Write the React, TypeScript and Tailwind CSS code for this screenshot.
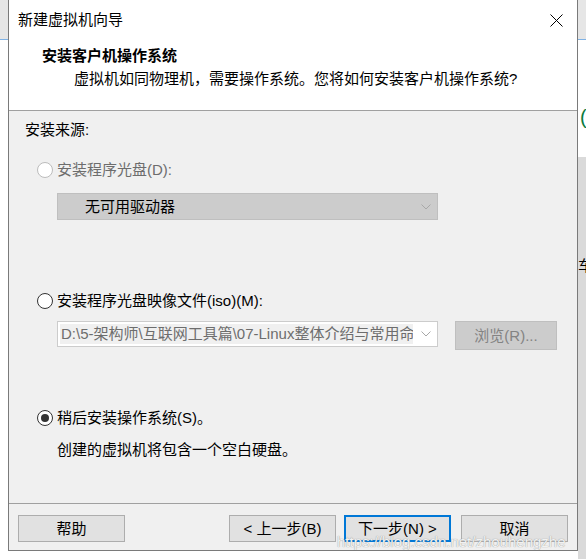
import React from "react";

const Radio = ({ checked, disabled }: { checked?: boolean; disabled?: boolean }) => (
	<span
		className={
			disabled
				? "w-4 h-4 rounded-full border border-[#bcbcbc] bg-white shrink-0"
				: "w-4 h-4 rounded-full border border-[#333333] bg-white shrink-0 flex items-center justify-center"
		}
	>
		{checked && <span className="w-2 h-2 rounded-full bg-[#333333]" />}
	</span>
);

const Chevron = () => (
	<svg width="10" height="6" viewBox="0 0 10 6" className="shrink-0">
		<polyline points="0.5,0.5 5,5 9.5,0.5" fill="none" stroke="#a8a8a8" strokeWidth="1" />
	</svg>
);

const FootButton = ({ label, primary }: { label: string; primary?: boolean }) => (
	<button
		className={
			primary
				? "w-[107px] h-[27px] bg-[#e1e1e1] border-2 border-[#0078d7] text-[15px] text-black flex items-center justify-center"
				: "w-[107px] h-[27px] bg-[#e1e1e1] border border-[#adadad] text-[15px] text-black flex items-center justify-center"
		}
	>
		{label}
	</button>
);

export default function App() {
	return (
		<div className="relative w-[586px] h-[559px] overflow-hidden bg-white flex font-['Liberation_Sans','Noto_Sans_CJK_SC',sans-serif] text-[15px] leading-[20px] text-black">
			{/* LEFT STRIP (window behind) */}
			<div className="w-[8px] flex flex-col">
				<div className="h-[39px] bg-[#e6e6e6]" />
				<div className="h-px bg-[#7fb2e5]" />
				<div className="flex-1 bg-white" />
			</div>

			{/* DIALOG */}
			<div className="w-[570px] h-[551px] flex flex-col border-x border-b border-[#7a7a7a]">
				{/* HEADER */}
				<div className="h-[111px] bg-white border-b border-[#a0a0a0] flex flex-col">
					<div className="h-[40px] flex items-center justify-between pl-[9px] pr-[14px]">
						<span>新建虚拟机向导</span>
						<svg width="13" height="13" viewBox="0 0 13 13">
							<line x1="0.5" y1="0.5" x2="12.5" y2="12.5" stroke="#000" strokeWidth="1" />
							<line x1="12.5" y1="0.5" x2="0.5" y2="12.5" stroke="#000" strokeWidth="1" />
						</svg>
					</div>
					<div className="mt-[6px] pl-[33px] font-bold">安装客户机操作系统</div>
					<div className="mt-[3px] pl-[65px]">虚拟机如同物理机，需要操作系统。您将如何安装客户机操作系统?</div>
				</div>

				{/* BODY */}
				<div className="flex-1 bg-[#f0f0f0] flex flex-col">
					<div className="mt-[9px] pl-[16px] h-[20px]">安装来源:</div>

					<div className="mt-[20px] pl-[28px] h-[20px] flex items-center gap-[4px] text-[#6d6d6d]">
						<Radio disabled />
						<span>安装程序光盘(D):</span>
					</div>

					<div className="mt-[13px] ml-[48px] w-[381px] h-[27px] bg-[#cccccc] border border-[#bfbfbf] flex items-center justify-between pl-[27px] pr-[6px]">
						<span>无可用驱动器</span>
						<Chevron />
					</div>

					<div className="mt-[71px] pl-[28px] h-[20px] flex items-center gap-[4px]">
						<Radio />
						<span>安装程序光盘映像文件(iso)(M):</span>
					</div>

					<div className="mt-[10px] ml-[48px] flex items-start gap-[17px]">
						<div className="w-[381px] h-[26px] bg-white border border-[#cccccc] flex items-center justify-between pl-[2px] pr-[6px]">
							<span className="w-[353px] overflow-hidden whitespace-nowrap bg-[#f0f0f0] text-[#6d6d6d] pl-[1px]">
								D:\5-架构师\互联网工具篇\07-Linux整体介绍与常用命令
							</span>
							<Chevron />
						</div>
						<button className="w-[102px] h-[29px] bg-[#cccccc] border border-[#bfbfbf] text-[#838383] flex items-center justify-center">
							浏览(R)...
						</button>
					</div>

					<div className="mt-[58px] pl-[28px] h-[20px] flex items-center gap-[4px]">
						<Radio checked />
						<span>稍后安装操作系统(S)。</span>
					</div>

					<div className="mt-[12px] pl-[48px] h-[20px]">创建的虚拟机将包含一个空白硬盘。</div>
				</div>

				{/* FOOTER */}
				<div className="h-[47px] bg-[#f0f0f0] border-t border-[#a0a0a0] flex items-start justify-between pt-[11px] pl-[9px] pr-[9px]">
					<FootButton label="帮助" />
					<div className="flex gap-[8px]">
						<FootButton label="< 上一步(B)" />
						<FootButton label="下一步(N) >" primary />
						<div className="ml-[2px]">
							<FootButton label="取消" />
						</div>
					</div>
				</div>
			</div>

			{/* RIGHT STRIP (window behind) */}
			<div className="flex-1 flex flex-col overflow-hidden">
				<div className="h-[39px] bg-[#e6e6e6]" />
				<div className="h-px bg-[#7fb2e5]" />
				<div className="h-[117px] bg-white pt-[66px] pl-[2px] text-[20px] leading-[22px] text-[#0b7a3e]">(</div>
				<div className="flex-1 bg-[#dadada] pt-[99px] text-[15px]">车</div>
			</div>

			{/* WATERMARK */}
			<div className="absolute left-[337px] top-[533px] text-[15px] leading-[18px] text-[#f2f2f2] [text-shadow:0_0_1px_#7a7a7a] font-['Liberation_Sans',sans-serif] whitespace-nowrap">
				https://blog.csdn.net/zhouhengzhe
			</div>
		</div>
	);
}
